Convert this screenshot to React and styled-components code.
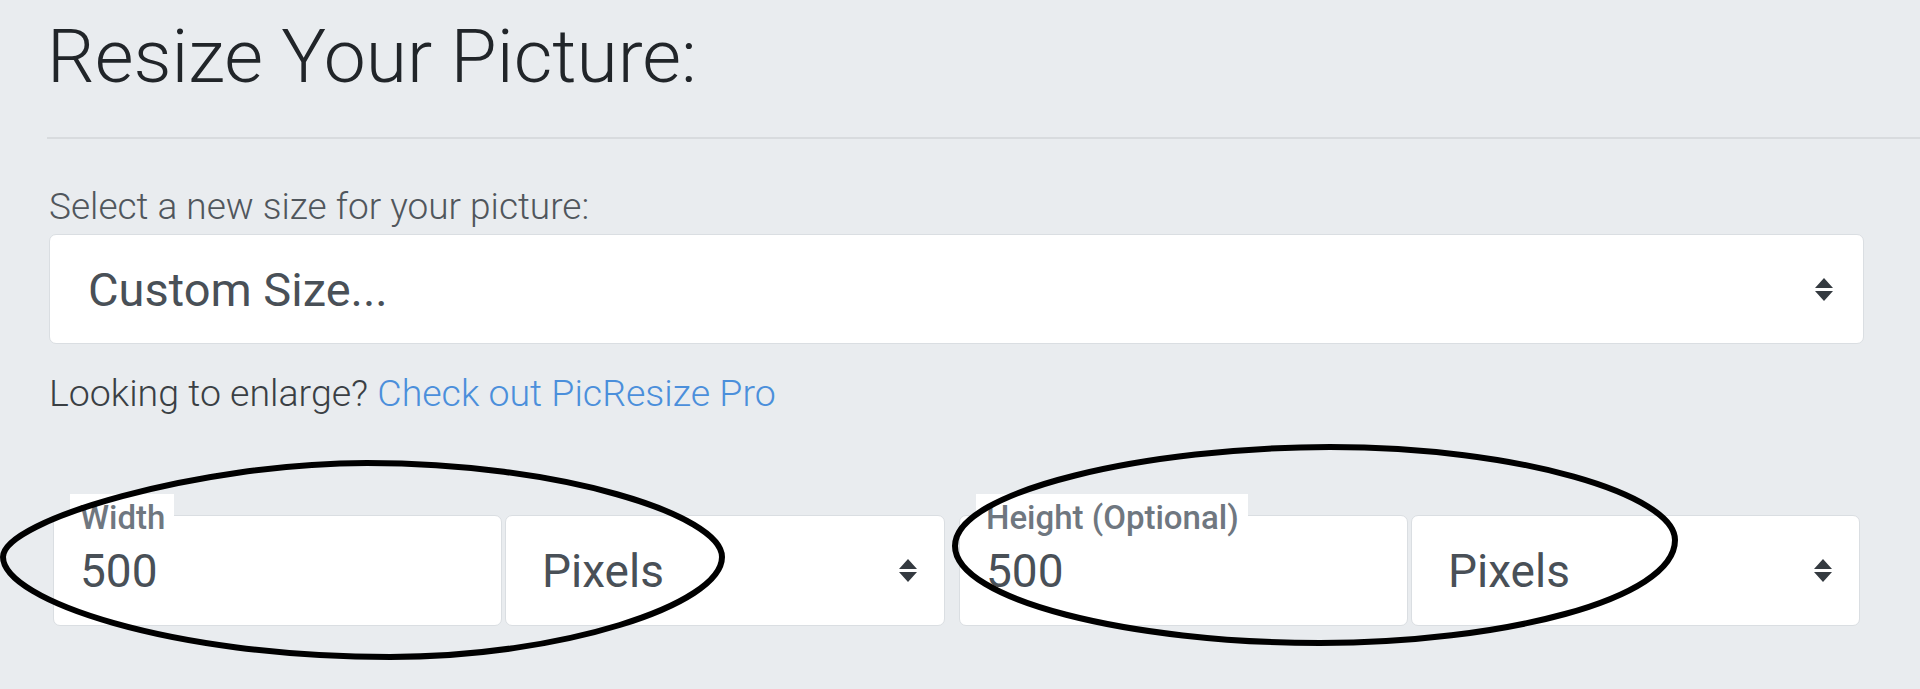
import React from 'react';
import styled, { createGlobalStyle } from 'styled-components';

const GlobalStyle = createGlobalStyle`
  html, body {
    margin: 0;
    padding: 0;
    background: #e9ecef;
    overflow: hidden;
  }
  body {
    font-family: Roboto, "Noto Sans", sans-serif;
  }
`;

const Page = styled.div`
  position: relative;
  width: 1920px;
  height: 689px;
  box-sizing: border-box;
  padding: 19px 56px 0 49px;
  background: #e9ecef;
`;

/* Heading */

const Title = styled.h1`
  margin: 0 0 0 -2px;
  font-size: 75px;
  line-height: 74px;
  font-weight: 300;
  color: #212529;
`;

const Divider = styled.hr`
  margin: 44px -56px 0 -2px;
  border: 0;
  height: 2px;
  background: #d8dbde;
`;

/* Size select */

const FieldLabel = styled.div`
  margin-top: 46px;
  font-size: 37px;
  line-height: 43px;
  font-weight: 300;
  color: #50565c;
`;

const SelectBox = styled.div`
  display: flex;
  align-items: center;
  justify-content: space-between;
  box-sizing: border-box;
  height: ${p => p.$height}px;
  margin-top: ${p => p.$top || 0}px;
  padding: 0 ${p => p.$padRight}px 0 ${p => p.$padLeft}px;
  background: #fff;
  border: 1px solid #dadee2;
  border-radius: 7px;
  font-size: ${p => p.$size}px;
  color: #495057;
  cursor: pointer;
`;

const Hint = styled.div`
  margin-top: 28px;
  font-size: 37.5px;
  line-height: 43px;
  font-weight: 300;
  color: #3a3f44;
`;

const Link = styled.a`
  color: #4b8fdb;
  text-decoration: none;
`;

/* Width / height row */

const DimRow = styled.div`
  display: grid;
  grid-template-columns: 892px 901px;
  column-gap: 14px;
  margin-top: 100px;
  padding: 0 4px 0 4px;
`;

const DimGroup = styled.div`
  display: grid;
  grid-template-columns: 449px 1fr;
  column-gap: 3px;
`;

const InputWrap = styled.div`
  position: relative;
`;

const ValueInput = styled.input`
  display: block;
  width: 100%;
  height: 111px;
  box-sizing: border-box;
  padding: 0 0 0 26px;
  background: #fff;
  border: 1px solid #dadee2;
  border-radius: 7px;
  font-family: Roboto, "Noto Sans", sans-serif;
  font-size: 46px;
  color: #495057;
  outline: none;
`;

const FloatLabel = styled.label`
  position: absolute;
  top: -21px;
  left: 17px;
  padding: 5px 9px 0 10px;
  background: #fff;
  font-size: 33px;
  line-height: 38px;
  font-weight: 500;
  color: #6f7780;
`;

const Marks = styled.svg`
  position: absolute;
  top: 0;
  left: 0;
  pointer-events: none;
`;

const SortArrows = () => (
  <svg width="18" height="23" viewBox="0 0 18 23">
    <path d="M9 0L0 10h18zM9 23L0 13h18z" fill="#343a40" />
  </svg>
);

const Dimension = ({ label, value }) => (
  <DimGroup>
    <InputWrap>
      <FloatLabel>{label}</FloatLabel>
      <ValueInput defaultValue={value} />
    </InputWrap>
    <SelectBox $height={111} $size={46} $padLeft={36} $padRight={27}>
      <span>Pixels</span>
      <SortArrows />
    </SelectBox>
  </DimGroup>
);

export default function App() {
  return (
    <Page>
      <GlobalStyle />
      <Title>Resize Your Picture:</Title>
      <Divider />
      <FieldLabel>Select a new size for your picture:</FieldLabel>
      <SelectBox $top={6} $height={110} $size={47} $padLeft={38} $padRight={30}>
        <span>Custom Size...</span>
        <SortArrows />
      </SelectBox>
      <Hint>
        Looking to enlarge? <Link href="#">Check out PicResize Pro</Link>
      </Hint>
      <DimRow>
        <Dimension label="Width" value="500" />
        <Dimension label="Height (Optional)" value="500" />
      </DimRow>
      <Marks width="1920" height="689" viewBox="0 0 1920 689">
        <path
          d="M3 557C3 520 200 463 367 463C560 463 722 515 722 557C722 605 560 657 390 657C170 657 3 600 3 557Z"
          fill="none"
          stroke="#000"
          strokeWidth="6"
        />
        <path
          d="M955 546C955 490 1150 447 1330 447C1520 447 1675 495 1675 540C1675 600 1500 643 1320 643C1130 643 955 600 955 546Z"
          fill="none"
          stroke="#000"
          strokeWidth="6"
        />
      </Marks>
    </Page>
  );
}
